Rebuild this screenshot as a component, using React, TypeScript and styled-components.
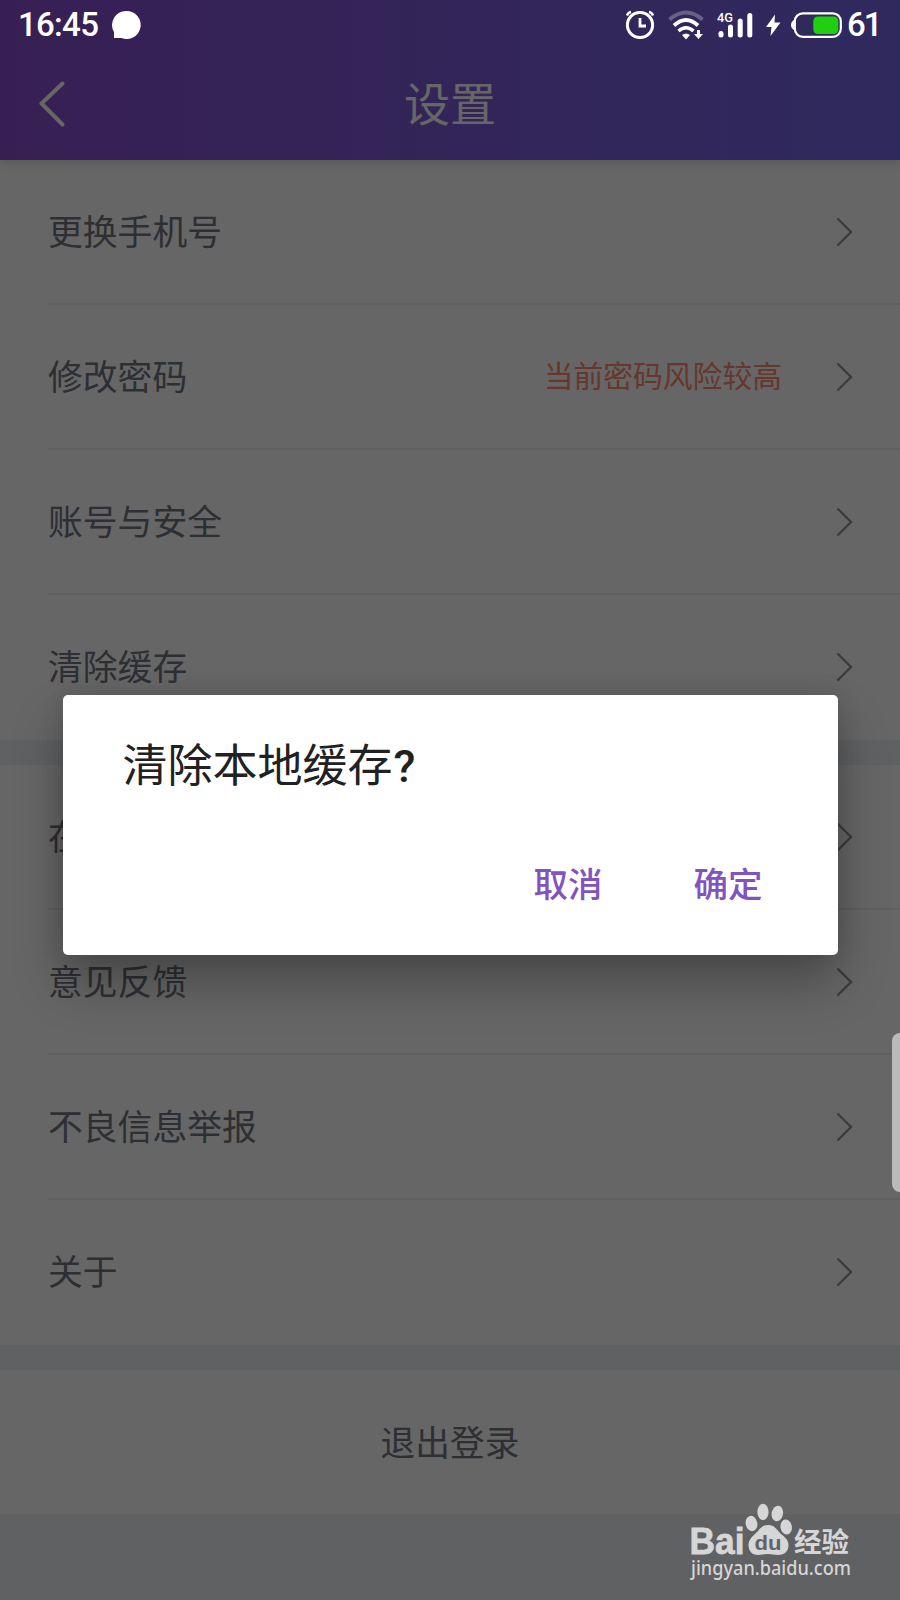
import React from "react";
import styled, { createGlobalStyle } from "styled-components";

const GlobalStyle = createGlobalStyle`
  * { box-sizing: border-box; }
  body {
    margin: 0;
    font-family: Roboto, "Noto Sans CJK SC", sans-serif;
  }
`;

const Screen = styled.div`
  position: relative;
  width: 900px;
  height: 1600px;
  overflow: hidden;
  display: flex;
  flex-direction: column;
  background: #eff2f7;
`;

const Header = styled.header`
  height: 160px;
  flex: none;
  padding: 50px 39px 0;
  display: grid;
  grid-template-columns: 60px 1fr 60px;
  align-items: center;
  background: linear-gradient(90deg, #8a4fd2, #7669ea);
  color: #fff;
  z-index: 1;
  box-shadow: 0 3px 10px rgba(60, 50, 110, 0.2);
`;

const BackButton = styled.button`
  border: 0;
  padding: 0 0 2px;
  background: none;
  color: inherit;
  display: flex;
`;

const Title = styled.h1`
  margin: 0;
  padding-bottom: 1px;
  text-align: center;
  font-size: 46px;
  font-weight: 400;
  line-height: 60px;
`;

const Group = styled.section`
  flex: none;
  background: #fff;
  padding-left: 48px;
  margin-bottom: 25px;
`;

const Row = styled.div<{ $last?: boolean }>`
  height: 145px;
  padding-right: 47px;
  display: flex;
  align-items: center;
  border-bottom: 2px solid ${(p) => (p.$last ? "transparent" : "#f0f0f3")};
`;

const Label = styled.span`
  flex: 1;
  padding-top: 2px;
  font-size: 34.8px;
  line-height: 50px;
  color: #72757f;
`;

const Warning = styled.span`
  margin-right: 54px;
  font-size: 29.8px;
  line-height: 44px;
  color: #ff8a70;
`;

const Logout = styled.button`
  flex: none;
  height: 144px;
  padding: 0 0 3px;
  border: 0;
  background: #fff;
  font: inherit;
  font-size: 34.7px;
  color: #72757f;
`;

const Scrim = styled.div`
  position: absolute;
  inset: 0;
  z-index: 2;
  display: flex;
  align-items: center;
  justify-content: center;
  padding-top: 50px;
  background: rgba(0, 0, 0, 0.6);
`;

const Dialog = styled.div`
  width: 775px;
  height: 260px;
  padding: 42px 75px 45px 60px;
  border-radius: 5px;
  background: #fff;
  box-shadow: 0 28px 50px rgba(0, 0, 0, 0.28), 0 0 24px rgba(0, 0, 0, 0.12);
  display: flex;
  flex-direction: column;
  justify-content: space-between;
`;

const DialogTitle = styled.h2`
  margin: 0;
  font-size: 45px;
  font-weight: 400;
  line-height: 60px;
  color: #212121;
`;

const QuestionMark = styled.span`
  margin-left: 1px;
  font-weight: 500;
`;

const Actions = styled.div`
  display: flex;
  justify-content: flex-end;
  gap: 91px;
`;

const Action = styled.button`
  border: 0;
  padding: 0;
  background: none;
  font: inherit;
  font-size: 34.5px;
  font-weight: 500;
  line-height: 50px;
  color: #8253c0;
`;

const StatusBar = styled.div`
  position: absolute;
  inset: 0 0 auto;
  z-index: 3;
  height: 50px;
  padding: 0 20px 0 18px;
  display: flex;
  align-items: center;
  justify-content: space-between;
  color: #fff;
  font-size: 33px;
  font-weight: 500;
  letter-spacing: -0.7px;
`;

const Cluster = styled.div`
  display: flex;
  align-items: center;
`;

const Clock = styled.span`
  width: 93px;
  line-height: 50px;
`;

const Percent = styled.span`
  width: 33px;
  margin-left: 4px;
  line-height: 50px;
  letter-spacing: -2px;
`;

const EdgeHandle = styled.div`
  position: absolute;
  z-index: 3;
  right: 0;
  top: 1033px;
  width: 8px;
  height: 159px;
  border-radius: 8px 0 0 8px;
  background: #bababa;
`;

const Watermark = styled.div`
  position: absolute;
  z-index: 4;
  left: 688px;
  top: 1500px;
`;

const Chevron = () => (
  <svg width="17" height="30" viewBox="0 0 17 30" fill="none" stroke="#969696" strokeWidth="2.4">
    <path d="M1.5 1.5 15 15 1.5 28.5" />
  </svg>
);

type Item = { label: string; warning?: string };

const groups: Item[][] = [
  [
    { label: "更换手机号" },
    { label: "修改密码", warning: "当前密码风险较高" },
    { label: "账号与安全" },
    { label: "清除缓存" },
  ],
  [{ label: "在线客服" }, { label: "意见反馈" }, { label: "不良信息举报" }, { label: "关于" }],
];

const StatusIcons = () => (
  <svg width="221" height="50" viewBox="622 0 221 50" fill="none" stroke="#fff">
    <circle cx="640" cy="25" r="12.6" strokeWidth="3" />
    <path d="M640 18v8h6" strokeWidth="2.8" />
    <path d="M627 15.5q1-3 4-3.500M653 15.500q-1-3-4-3.500" strokeWidth="2.500" />
    <path d="M669.500 19.500q16.500-14 33 0" strokeWidth="3.800" opacity=".27" />
    <path d="M674 25.500q12-11 24 0" strokeWidth="3.800" />
    <path d="M678.500 31q7.500-6.500 15 0" strokeWidth="3.500" />
    <path d="M682 35q4-3 8 0l-4 4.500zM697 30h3v4h3l-4.500 5-4.500-5h3z" fill="#fff" stroke="none" />
    <g strokeWidth="5" strokeLinecap="round">
      <path d="M721 33.500v1.500M730.500 27v8M740.200 21v14M749.800 15.500v19.500" />
    </g>
    <text x="717" y="21.500" fill="#fff" stroke="none" fontSize="13.500" fontWeight="500" fontFamily="Roboto" letterSpacing="0" textLength="16" lengthAdjust="spacingAndGlyphs">4G</text>
    <path d="M775 14.500 766 27h5.500l-1 9L780.500 22.500h-6z" fill="#fff" stroke="none" />
    <rect x="794.800" y="13.300" width="46" height="23.500" rx="8" strokeWidth="2.200" />
    <path d="M794 20.500q-2.500 1-2.500 4.500t2.500 4.500z" fill="#fff" stroke="#fff" />
    <rect x="813.300" y="16.500" width="25" height="17.500" rx="4.500" fill="#20d010" stroke="none" />
  </svg>
);

const BaiduLogo = () => (
  <svg width="170" height="90" viewBox="0 0 170 90" fill="#d6d6d6">
    <text x="1.500" y="53.500" fontFamily="Liberation Sans" fontWeight="700" fontSize="37.500" textLength="55" lengthAdjust="spacingAndGlyphs" stroke="#d6d6d6" strokeWidth="0.8">Bai</text>
    <ellipse cx="63.500" cy="23.500" rx="5.800" ry="7.700" transform="rotate(-12 63.500 23.500)" />
    <ellipse cx="75" cy="12" rx="5.600" ry="8.300" />
    <ellipse cx="89.300" cy="13.500" rx="5.700" ry="7.800" transform="rotate(12 89.300 13.500)" />
    <ellipse cx="98.200" cy="27" rx="5.700" ry="7.500" transform="rotate(-8 98.200 27)" />
    <path d="M80 25c7 0 9 5 12 8s8.500 6 8.500 12c0 7-5 10-10.500 10-4 0-6-1-10-1s-7 1-10 1c-6 0-9.500-4-9.500-10 0-5 4-9 7.500-12s5-8 12-8z" />
    <text x="66.500" y="50" fill="#626365" fontFamily="Liberation Sans" fontWeight="700" fontSize="21" textLength="27" lengthAdjust="spacingAndGlyphs">du</text>
    <text x="106" y="52" fontFamily="Noto Sans CJK SC" fontWeight="700" fontSize="27.500">经验</text>
    <text x="3" y="75" fontFamily="Noto Sans" fontSize="19.500" fontWeight="500" textLength="160" lengthAdjust="spacingAndGlyphs">jingyan.baidu.com</text>
  </svg>
);

export default function App() {
  return (
    <Screen>
      <GlobalStyle />
      <Header>
        <BackButton aria-label="返回">
          <svg width="26" height="46" viewBox="0 0 26 46" fill="none" stroke="currentColor" strokeWidth="4" strokeLinecap="round" strokeLinejoin="round">
            <path d="M23.500 2.500 2.500 22.500l21 21" />
          </svg>
        </BackButton>
        <Title>设置</Title>
      </Header>
      {groups.map((items, g) => (
        <Group key={g}>
          {items.map((item, i) => (
            <Row key={item.label} $last={i === items.length - 1}>
              <Label>{item.label}</Label>
              {item.warning && <Warning>{item.warning}</Warning>}
              <Chevron />
            </Row>
          ))}
        </Group>
      ))}
      <Logout>退出登录</Logout>
      <Scrim>
        <Dialog role="dialog">
          <DialogTitle>
            清除本地缓存<QuestionMark>?</QuestionMark>
          </DialogTitle>
          <Actions>
            <Action>取消</Action>
            <Action>确定</Action>
          </Actions>
        </Dialog>
      </Scrim>
      <StatusBar>
        <Cluster>
          <Clock>16:45</Clock>
          <svg width="30" height="30" viewBox="0 0 30 30" fill="#fff">
            <path d="M15.500 1a14 14 0 1 1-5 27H3v-6A14 14 0 0 1 15.500 1z" />
          </svg>
        </Cluster>
        <Cluster>
          <StatusIcons />
          <Percent>61</Percent>
        </Cluster>
      </StatusBar>
      <EdgeHandle />
      <Watermark>
        <BaiduLogo />
      </Watermark>
    </Screen>
  );
}
